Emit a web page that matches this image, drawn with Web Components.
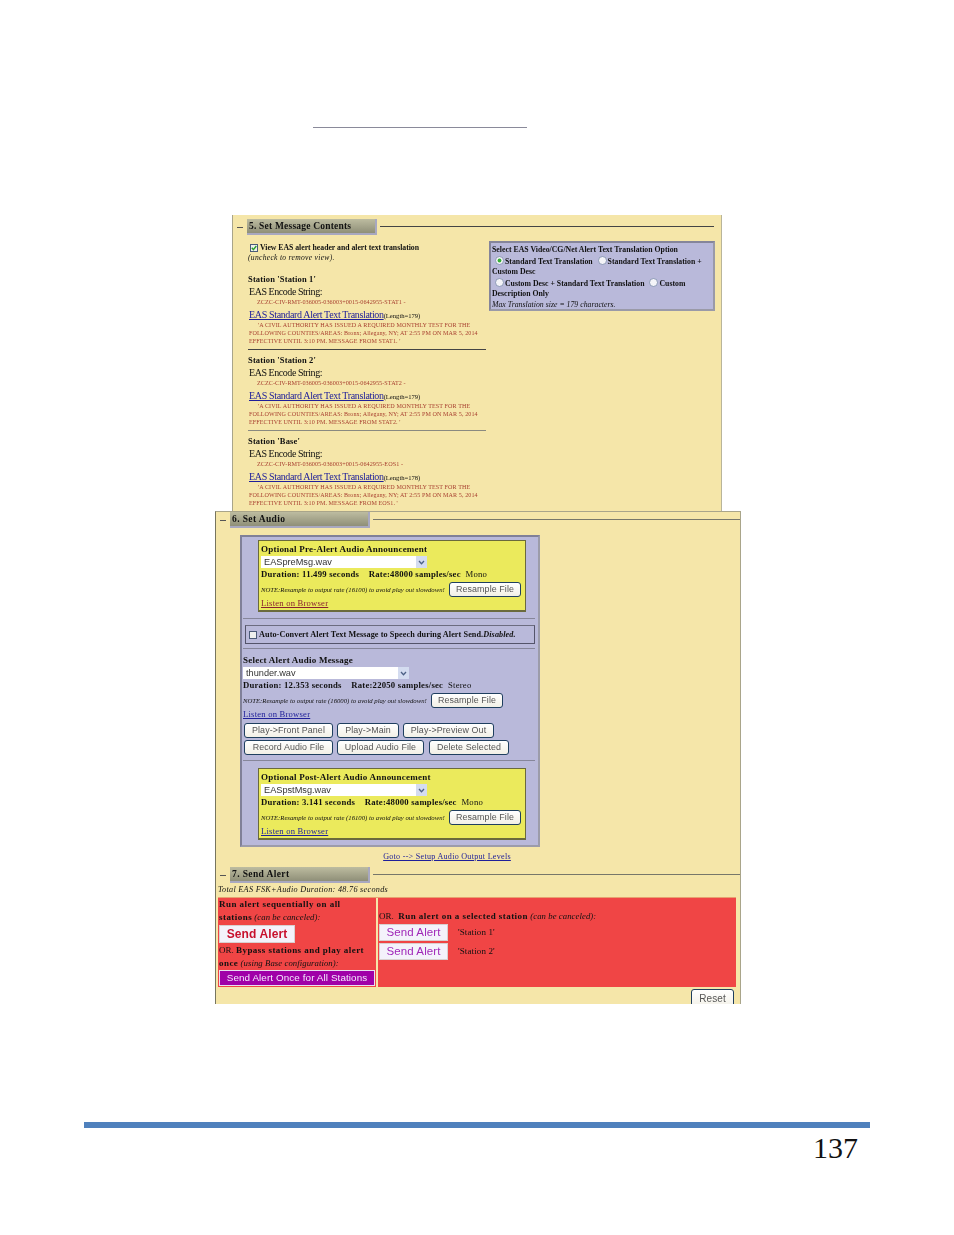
<!DOCTYPE html>
<html>
<head>
<meta charset="utf-8">
<title>EAS alert setup</title>
<style>
  html, body { margin: 0; padding: 0; background: #fff; }
  body { font-family: "Liberation Serif", serif; color: #111; }
</style>
</head>
<body>
<report-page>
  <eas-panel kind="top">
    <section-head label="5. Set Message Contents"></section-head>
    <message-contents></message-contents>
  </eas-panel>
  <eas-panel kind="main">
    <section-head label="6. Set Audio" flush></section-head>
    <audio-settings></audio-settings>
    <send-alert></send-alert>
  </eas-panel>
</report-page>

<script>
class ReportPage extends HTMLElement {
  constructor() {
    super();
    this.attachShadow({ mode: 'open' });
    this.shadowRoot.innerHTML = `
      <style>
        :host { display: block; width: 954px; height: 1235px; overflow: hidden; }
        .rule { width: 214px; height: 1px; background: #8a8a9a; margin: 127px 0 87px 313px; }
        .bar { height: 6px; background: #4f81bd; margin: 118px 84px 0; }
        .num { text-align: right; padding-right: 96px; font: 30px/36px "Liberation Serif", serif; color: #111; margin-top: 2px; }
      </style>
      <div class="rule"></div>
      <slot></slot>
      <div class="bar"></div>
      <div class="num">137</div>`;
  }
}

class EasPanel extends HTMLElement {
  constructor() {
    super();
    this.attachShadow({ mode: 'open' });
    this.shadowRoot.innerHTML = `
      <style>
        :host { display: block; box-sizing: border-box; background: #f5e6a9; overflow: hidden; filter: blur(.4px); }
        :host([kind="top"]) { width: 490px; height: 296px; margin-left: 232px; border-left: 1px solid #a9a58a; border-right: 1px solid #b9b59a; }
        :host([kind="main"]) { width: 526px; height: 493px; margin-left: 215px; border-left: 1px solid #77755f; border-right: 1px solid #a9a58a; border-top: 1px solid #a9a58a; }
      </style>
      <slot></slot>`;
  }
}

class SectionHead extends HTMLElement {
  constructor() {
    super();
    this.attachShadow({ mode: 'open' });
    const flush = this.hasAttribute('flush');
    this.shadowRoot.innerHTML = `
      <style>
        :host { display: flex; align-items: center; height: 16px; padding-top: ${flush ? 0 : 4}px; color: #111; }
        .minus { width: 6px; height: 1px; background: #555; margin: 0 4px; }
        .box { box-sizing: border-box; height: 16px; width: ${flush ? 140 : 130}px; padding-left: 2px;
               background: linear-gradient(#bdbca0, #8f8f78); border: 1px solid #a8a8c0; border-width: 0 2px 2px 0;
               font: bold 9.5px/14px "Liberation Serif", serif; letter-spacing: ${flush ? .38 : .2}px; white-space: nowrap; }
        .line { flex: 1; height: 1px; background: ${flush ? '#77776a' : '#444'}; margin: 0 ${flush ? 0 : 7}px 0 3px; position: relative; top: -1px; }
      </style>
      <span class="minus"></span>
      <div class="box">${this.getAttribute('label')}</div>
      <span class="line"></span>`;
  }
}

class EasCheck extends HTMLElement {
  constructor() {
    super();
    this.attachShadow({ mode: 'open' });
    const on = this.hasAttribute('checked');
    this.shadowRoot.innerHTML = `
      <style>
        :host { display: inline-block; width: 8px; height: 8px; flex: none; }
        svg { display: block; }
      </style>
      <svg width="8" height="8" viewBox="0 0 8 8">
        <rect x=".5" y=".5" width="7" height="7" fill="#eef0ee" stroke="#4a5a78"/>
        ${on ? '<path d="M1.8 3.8 L3.4 5.6 L6.3 2" fill="none" stroke="#2aa02a" stroke-width="1.4"/>' : ''}
      </svg>`;
  }
}

class EasRadio extends HTMLElement {
  constructor() {
    super();
    this.attachShadow({ mode: 'open' });
    const on = this.hasAttribute('checked');
    this.shadowRoot.innerHTML = `
      <style>
        :host { display: inline-block; width: 9px; height: 9px; margin: 0 1px 0 3px; vertical-align: -1px; }
        svg { display: block; }
      </style>
      <svg width="9" height="9" viewBox="0 0 9 9">
        <circle cx="4.5" cy="4.5" r="4" fill="#f4f4f8" stroke="#7a8aa8" stroke-width=".8"/>
        ${on ? '<circle cx="4.5" cy="4.5" r="1.9" fill="#35b035"/>' : ''}
      </svg>`;
  }
}

class EasSelect extends HTMLElement {
  constructor() {
    super();
    this.attachShadow({ mode: 'open' });
    this.shadowRoot.innerHTML = `
      <style>
        :host { display: flex; box-sizing: border-box; width: 166px; height: 12px; background: #fff;
                font: 9.2px/12px "Liberation Sans", sans-serif; color: #333; padding-left: 3px; justify-content: space-between; }
        .arrow { width: 11px; height: 12px; background: #d4dcf0; display: flex; align-items: center; justify-content: center; }
      </style>
      <span><slot></slot></span>
      <span class="arrow"><svg width="7" height="5" viewBox="0 0 7 5"><path d="M1 1 L3.5 3.8 L6 1" fill="none" stroke="#4d6185" stroke-width="1.3"/></svg></span>`;
  }
}

class EasButton extends HTMLElement {
  constructor() {
    super();
    this.attachShadow({ mode: 'open' });
    this.shadowRoot.innerHTML = `
      <style>
        :host { display: inline-flex; box-sizing: border-box; align-items: center; justify-content: center; flex: none;
                width: var(--w, 72px); height: var(--h, 15px);
                background: var(--bg, linear-gradient(#fff, #f2f0e6));
                border: 1px solid var(--bd, #1f3f5f); border-radius: var(--r, 3px);
                color: var(--fg, #555); font: var(--wt, normal) var(--fs, 8.9px)/1 "Liberation Sans", sans-serif;
                white-space: nowrap; letter-spacing: .1px; }
      </style>
      <slot></slot>`;
  }
}

class StationBlock extends HTMLElement {
  constructor() {
    super();
    this.attachShadow({ mode: 'open' });
    const a = n => this.getAttribute(n);
    this.shadowRoot.innerHTML = `
      <style>
        :host { display: block; height: 81px; white-space: nowrap; }
        .name { font: bold 8.5px/11px "Liberation Serif", serif; letter-spacing: .15px; height: 11px; }
        .enc { font: 10px/13px "Liberation Serif", serif; letter-spacing: -.45px; padding-left: 1px; height: 13px; }
        .code { font: 6.2px/7px "Liberation Serif", serif; color: #a84030; padding-left: 9px; height: 7px; letter-spacing: .04px; margin-bottom: 2px; }
        .link { padding-left: 1px; height: 11px; line-height: 11px; }
        .link a { font: 10px/11px "Liberation Serif", serif; color: #20209a; text-decoration: underline; letter-spacing: -.35px; }
        .link small { font: 6.6px/11px "Liberation Serif", serif; color: #111; }
        .tr { font: 6.1px/8.2px "Liberation Serif", serif; color: #a84030; padding-left: 1px; letter-spacing: .086px; height: 25px; margin-top: 3px; }
        .tr .ind { padding-left: 9px; }
        .hr { height: 1px; background: ${a('rule') || 'transparent'}; margin-top: 3px; }
      </style>
      <div class="name">Station '${a('name')}'</div>
      <div class="enc">EAS Encode String:</div>
      <div class="code">${a('code')}</div>
      <div class="link"><a>EAS Standard Alert Text Translation</a><small>(Length=${a('len')})</small></div>
      <div class="tr">
        <div class="ind">'A CIVIL AUTHORITY HAS ISSUED A REQUIRED MONTHLY TEST FOR THE</div>
        <div>FOLLOWING COUNTIES/AREAS: Bronx; Allegany, NY; AT 2:55 PM ON MAR 5, 2014</div>
        <div>EFFECTIVE UNTIL 3:10 PM. MESSAGE FROM ${a('from')}. '</div>
      </div>
      <div class="hr"></div>`;
  }
}

class MessageContents extends HTMLElement {
  constructor() {
    super();
    this.attachShadow({ mode: 'open' });
    this.shadowRoot.innerHTML = `
      <style>
        :host { display: flex; padding: 8px 0 0 15px; align-items: flex-start; }
        .left { width: 238px; flex: none; }
        .view { display: flex; align-items: center; gap: 2px; padding-left: 2px; height: 10px; white-space: nowrap;
                font: bold 7.76px/10px "Liberation Serif", serif; letter-spacing: -.02px; }
        .un { font: italic 7.6px/10px "Liberation Serif", serif; height: 21px; letter-spacing: .29px; }
        .opt { box-sizing: border-box; width: 226px; height: 70px; margin: -2px 0 0 3px; padding: 2px 1px;
               background: #b9b9da; border: 2px solid #9a9aa8; border-top-color: #85859a; border-left-color: #85859a;
               font: bold 7.75px/10.6px "Liberation Serif", serif; letter-spacing: .02px; }
        .opt div { white-space: nowrap; }
        .opt i { font-weight: normal; }
      </style>
      <div class="left">
        <div class="view"><eas-check checked></eas-check><span>View EAS alert header and alert text translation</span></div>
        <div class="un">(uncheck to remove view).</div>
        <station-block name="Station 1" code="ZCZC-CIV-RMT-036005-036003+0015-0642955-STAT1 -" len="179" from="STAT1" rule="#444"></station-block>
        <station-block name="Station 2" code="ZCZC-CIV-RMT-036005-036003+0015-0642955-STAT2 -" len="179" from="STAT2" rule="#8a8a80"></station-block>
        <station-block name="Base" code="ZCZC-CIV-RMT-036005-036003+0015-0642955-EOS1 -" len="178" from="EOS1"></station-block>
      </div>
      <div class="opt">
        <div>Select EAS Video/CG/Net Alert Text Translation Option</div>
        <div><eas-radio checked></eas-radio>Standard Text Translation <eas-radio></eas-radio>Standard Text Translation +</div>
        <div>Custom Desc</div>
        <div><eas-radio></eas-radio>Custom Desc + Standard Text Translation <eas-radio></eas-radio>Custom</div>
        <div>Description Only</div>
        <div><i>Max Translation size = 179 characters.</i></div>
      </div>`;
  }
}

class AudioFile extends HTMLElement {
  constructor() {
    super();
    this.attachShadow({ mode: 'open' });
    const a = n => this.getAttribute(n);
    this.shadowRoot.innerHTML = `
      <style>
        :host { display: block; white-space: nowrap; color: #111; }
        .t { font: bold 9px/12px "Liberation Serif", serif; letter-spacing: .22px; height: 12px; }
        eas-select { margin-top: 1px; }
        .d { font: bold 8.7px/12px "Liberation Serif", serif; letter-spacing: .22px; height: 12px; }
        .d span { font-weight: normal; }
        .n { display: flex; align-items: center; justify-content: space-between; height: 15px; margin-top: 2px;
             font: italic 6.7px/15px "Liberation Serif", serif; width: 260px; }
        .l { font: 8.6px/12px "Liberation Serif", serif; letter-spacing: .22px; color: var(--lk, #20209a); text-decoration: underline; height: 12px; }
      </style>
      <div class="t">${a('title')}</div>
      <eas-select>${a('file')}</eas-select>
      <div class="d">Duration: ${a('dur')} seconds &nbsp;&nbsp; Rate:${a('rate')} samples/sec &nbsp;<span>${a('ch')}</span></div>
      <div class="n"><span>NOTE:Resample to output rate (${a('out')}) to avoid play out slowdown!</span><eas-button>Resample File</eas-button></div>
      <div class="l">Listen on Browser</div>`;
  }
}

class AudioSettings extends HTMLElement {
  constructor() {
    super();
    this.attachShadow({ mode: 'open' });
    this.shadowRoot.innerHTML = `
      <style>
        :host { display: block; padding: 7px 0 0 24px; }
        .outer { box-sizing: border-box; width: 300px; height: 312px; background: #b9b9da; border: 2px solid #808098; border-bottom-color: #9c9caa; border-right-color: #9c9caa; padding: 3px 0 0 1px; }
        .yel { box-sizing: border-box; width: 268px; height: 72px; margin-left: 15px; background: #ebea5c; border: 1px solid #6a6a3c; border-bottom-width: 2px; padding: 2px 0 0 2px; --lk: #8a2030; }
        .yel.post { --lk: #20209a; margin-top: 7px; }
        .hr { height: 1px; background: #86869a; margin: 6px 3px 0 0; }
        .auto { box-sizing: border-box; display: flex; align-items: center; gap: 2px; height: 19px; width: 290px; margin: 6px 0 0 2px; padding-left: 3px;
                border: 1px solid #54546a; border-top-color: #6c6c80; font: bold 8.2px/12px "Liberation Serif", serif; letter-spacing: .08px; white-space: nowrap; }
        .mid { padding: 5px 0 0 0; }
        .btns { display: flex; gap: 4px; margin: 3px 0 0 1px; }
        .btns + .btns { margin-top: 2px; }
        .goto { text-align: center; width: 462px; margin-left: -24px; font: 8.1px/12px "Liberation Serif", serif; letter-spacing: .27px; color: #20209a; text-decoration: underline; margin-top: 4px; height: 12px; }
      </style>
      <div class="outer">
        <div class="yel">
          <audio-file title="Optional Pre-Alert Audio Announcement" file="EASpreMsg.wav" dur="11.499" rate="48000" ch="Mono" out="16100"></audio-file>
        </div>
        <div class="hr"></div>
        <div class="auto"><eas-check></eas-check><span>Auto-Convert Alert Text Message to Speech during Alert Send.<i>Disabled.</i></span></div>
        <div class="hr" style="margin-top:4px"></div>
        <div class="mid">
          <audio-file title="Select Alert Audio Message" file="thunder.wav" dur="12.353" rate="22050" ch="Stereo" out="16000"></audio-file>
          <div class="btns">
            <eas-button style="--w:89px">Play-&gt;Front Panel</eas-button>
            <eas-button style="--w:62px">Play-&gt;Main</eas-button>
            <eas-button style="--w:91px">Play-&gt;Preview Out</eas-button>
          </div>
          <div class="btns">
            <eas-button style="--w:89px">Record Audio File</eas-button>
            <eas-button style="--w:87px">Upload Audio File</eas-button>
            <eas-button style="--w:80px;margin-left:1px">Delete Selected</eas-button>
          </div>
        </div>
        <div class="hr" style="margin-top:5px"></div>
        <div class="yel post">
          <audio-file title="Optional Post-Alert Audio Announcement" file="EASpstMsg.wav" dur="3.141" rate="48000" ch="Mono" out="16100"></audio-file>
        </div>
      </div>
      <div class="goto">Goto --&gt; Setup Audio Output Levels</div>`;
  }
}

class SendAlert extends HTMLElement {
  constructor() {
    super();
    this.attachShadow({ mode: 'open' });
    this.shadowRoot.innerHTML = `
      <style>
        :host { display: block; color: #111; }
        .head { margin-top: 4px; }
        .tot { font: italic 8.2px/12px "Liberation Serif", serif; letter-spacing: .29px; padding-left: 2px; margin-top: 1px; height: 12px; white-space: nowrap; }
        .grid { display: grid; grid-template-columns: 158px 358px; gap: 2px; margin: 1px 0 0 2px; height: 90px; border-top: 1px solid #e8a070; box-sizing: border-box; width: 518px; }
        .cell { background: #f04545; white-space: nowrap; font: 9px/13px "Liberation Serif", serif; overflow: hidden; }
        .l { padding: 0 0 0 1px; }
        .b { font-weight: bold; letter-spacing: .45px; }
        .c { font: italic 8.7px/13px "Liberation Serif", serif; letter-spacing: .08px; }
        .send { --w: 76px; --h: 18px; --bg: #f4f2fb; --bd: #d8d0d0; --r: 0; --fg: #c8102e; --wt: bold; --fs: 12px; margin-top: 1px; }
        .once { --w: 156px; --h: 16px; --bg: #a000a8; --bd: #e8e0f0; --r: 0; --fg: #f4e8ff; --fs: 9.85px; }
        .r { padding: 12px 0 0 1px; }
        .st { display: flex; align-items: center; height: 19px; gap: 10px; font: 9px/13px "Liberation Serif", serif; letter-spacing: .12px; }
        .st eas-button { --w: 69px; --h: 17px; --bg: #f4f2fb; --bd: #d8d0d0; --r: 0; --fg: #a028b8; --fs: 11.5px; }
        .reset { display: flex; justify-content: flex-end; padding: 2px 6px 0 0; --w: 43px; --h: 20px; --fs: 10px; }
      </style>
      <section-head class="head" label="7. Send Alert" flush></section-head>
      <div class="tot">Total EAS FSK+Audio Duration: 48.76 seconds</div>
      <div class="grid">
        <div class="cell l">
          <div class="b">Run alert sequentially on all</div>
          <div><span class="b">stations</span> <span class="c">(can be canceled):</span></div>
          <eas-button class="send">Send Alert</eas-button>
          <div style="margin-top:1px">OR. <span class="b">Bypass stations and play alert</span></div>
          <div><span class="b">once</span> <span class="c">(using Base configuration):</span></div>
          <eas-button class="once">Send Alert Once for All Stations</eas-button>
        </div>
        <div class="cell r">
          <div>OR. &nbsp;<span class="b">Run alert on a selected station</span> <span class="c">(can be canceled):</span></div>
          <div class="st"><eas-button>Send Alert</eas-button><span>'Station 1'</span></div>
          <div class="st"><eas-button>Send Alert</eas-button><span>'Station 2'</span></div>
        </div>
      </div>
      <div class="reset"><eas-button>Reset</eas-button></div>`;
  }
}

customElements.define('report-page', ReportPage);
customElements.define('eas-panel', EasPanel);
customElements.define('section-head', SectionHead);
customElements.define('eas-check', EasCheck);
customElements.define('eas-radio', EasRadio);
customElements.define('eas-select', EasSelect);
customElements.define('eas-button', EasButton);
customElements.define('station-block', StationBlock);
customElements.define('message-contents', MessageContents);
customElements.define('audio-file', AudioFile);
customElements.define('audio-settings', AudioSettings);
customElements.define('send-alert', SendAlert);
</script>
</body>
</html>
